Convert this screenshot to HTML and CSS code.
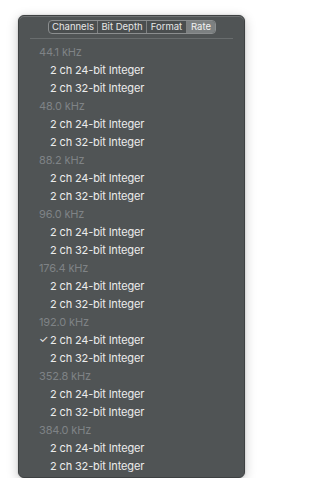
FILE: index.html
```html
<!DOCTYPE html>
<html>
<head>
<meta charset="utf-8">
<link rel="stylesheet" href="styles.css">
</head>
<body>
<div class="panel">
  <div class="tabs">
    <div class="seg">
      <span class="tab w1">Channels</span>
      <span class="tab w2">Bit Depth</span>
      <span class="tab w3">Format</span>
      <span class="tab w4 active">Rate</span>
    </div>
  </div>
  <div class="sep"></div>
  <ul class="list">
    <li class="hdr">44.1 kHz</li>
    <li class="item">2 ch 24-bit Integer</li>
    <li class="item">2 ch 32-bit Integer</li>
    <li class="hdr">48.0 kHz</li>
    <li class="item">2 ch 24-bit Integer</li>
    <li class="item">2 ch 32-bit Integer</li>
    <li class="hdr">88.2 kHz</li>
    <li class="item">2 ch 24-bit Integer</li>
    <li class="item">2 ch 32-bit Integer</li>
    <li class="hdr">96.0 kHz</li>
    <li class="item">2 ch 24-bit Integer</li>
    <li class="item">2 ch 32-bit Integer</li>
    <li class="hdr">176.4 kHz</li>
    <li class="item">2 ch 24-bit Integer</li>
    <li class="item">2 ch 32-bit Integer</li>
    <li class="hdr">192.0 kHz</li>
    <li class="item checked"><span class="check">✓</span>2 ch 24-bit Integer</li>
    <li class="item">2 ch 32-bit Integer</li>
    <li class="hdr">352.8 kHz</li>
    <li class="item">2 ch 24-bit Integer</li>
    <li class="item">2 ch 32-bit Integer</li>
    <li class="hdr">384.0 kHz</li>
    <li class="item">2 ch 24-bit Integer</li>
    <li class="item">2 ch 32-bit Integer</li>
  </ul>
</div>
</body>
</html>
```

FILE: styles.css
```css
html, body {
  margin: 0;
  padding: 0;
  background: #ffffff;
}
body {
  font-family: Inter, "Liberation Sans", sans-serif;
  padding: 15px 0 0 18px;
}
.panel {
  box-sizing: border-box;
  width: 227px;
  height: 463px;
  background: #505455;
  border-radius: 6px;
  border: 1px solid #3e4142;
  box-shadow: inset 0 1px 0 rgba(255,255,255,0.18), 0 3px 12px rgba(0,0,0,0.22), 0 0 2px rgba(0,0,0,0.2);
  padding-top: 4px;
}
.tabs {
  display: flex;
  justify-content: flex-start;
  padding-left: 29px;
}
.seg {
  display: flex;
  height: 12px;
  border: 1px solid #8b8e8f;
  border-radius: 4px;
  overflow: hidden;
  background: #4a4e4f;
}
.tab {
  box-sizing: border-box;
  font-size: 9.5px;
  line-height: 12px;
  color: #e6e7e7;
  text-align: center;
  border-right: 1px solid #7e8182;
}
.tab:last-child { border-right: none; }
.w1 { width: 49px; }
.w2 { width: 49px; }
.w3 { width: 40px; }
.w4 { width: 28px; }
.tab.active {
  background: #7c8081;
  color: #f2f2f2;
}
.sep {
  height: 1px;
  background: #696d6e;
  margin: 4px 11px 0 11px;
}
.list {
  list-style: none;
  margin: 4px 0 0 0;
  padding: 0;
}
.list li {
  height: 18px;
  line-height: 18px;
  font-size: 11px;
  letter-spacing: -0.15px;
  white-space: nowrap;
}
.hdr {
  color: #7f8386;
  padding-left: 20px;
}
.item {
  color: #ececec;
  padding-left: 31px;
  position: relative;
}
.check {
  position: absolute;
  left: 20px;
  top: 0;
  font-size: 10.5px;
  color: #f0f0f0;
}
```
